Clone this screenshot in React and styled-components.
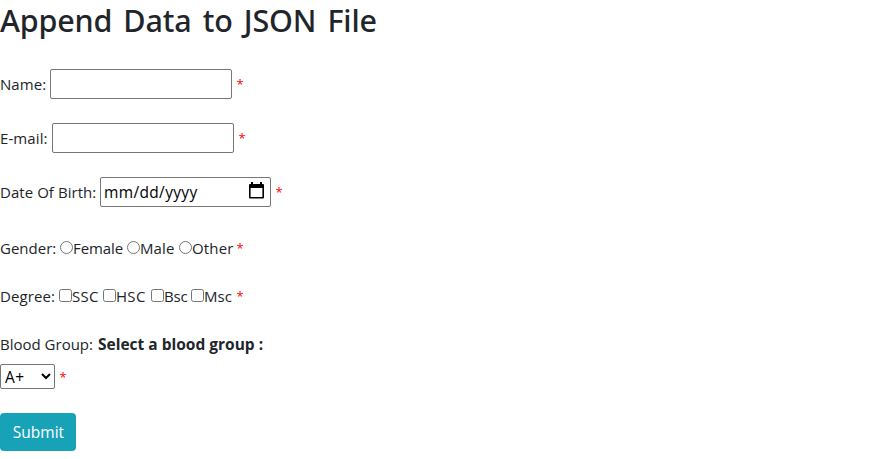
import React from "react";
import styled, { createGlobalStyle } from "styled-components";

const Global = createGlobalStyle`
  *, *::before, *::after { box-sizing: border-box; }
  body {
    margin: 0; background: #fff; color: #212529;
    font: 400 16px/24px "Open Sans", "Noto Sans", sans-serif;
  }
`;
const Form = styled.form`
  display: flex; flex-direction: column; align-items: flex-start;
`;
const Title = styled.h2`
  margin: 0 0 27px; font-family: "Noto Sans", "Open Sans", sans-serif;
  font-size: 30.5px; line-height: 40px; height: 40px;
  font-weight: 500; white-space: nowrap; letter-spacing: -0.2px; word-spacing: 3.5px;
`;
const Row = styled.div`
  display: flex; align-items: center; white-space: nowrap;
  height: ${p => p.$h}px; margin-bottom: ${p => p.$gap}px;
`;
const Label = styled.span`
  width: ${p => p.$w}px; flex: none; font-size: 15px; letter-spacing: ${p => p.$ls ?? 0}px;
`;
const BoldLabel = styled.label`
  font-size: 15.5px; font-weight: 700;
`;
const Field = styled.input`
  width: 182px; height: 30px; margin: 0; padding: 1px 2px;
  border: 1px solid #767676; border-radius: 2px; font: inherit;
`;
const DateField = styled.div`
  width: 171px; height: 30px; padding: 0 6px 0 3px;
  border: 1px solid #767676; border-radius: 2px;
  display: flex; align-items: center; justify-content: space-between;
  font-size: 15.5px; letter-spacing: 0.35px; color: #000;
`;
const CalendarSvg = styled.svg`
  margin-bottom: 3px;
`;
const Check = styled.input`
  width: 13px; height: 13px; margin: 0 0 2px; flex: none;
`;
const Star = styled.span`
  color: #f00; margin-left: ${p => p.$gap ?? 4.5}px; font-size: 13px; line-height: 22px;
`;
const Select = styled.select`
  width: 55px; height: 25px; margin: 0; padding: 0; font: inherit; font-size: 15.5px; letter-spacing: 0.4px;
  color: #000; background: #fff; border: 1px solid #767676; border-radius: 2px;
`;
const Submit = styled.button`
  width: 76px; height: 38px; padding: 0 0 0 1px; border: 0; border-radius: 4px;
  background: #17a2b8; color: #fff; font: inherit; font-size: 15.5px;
`;

const CalendarIcon = () => (
  <CalendarSvg width="15" height="17" viewBox="0 0 15 17" aria-hidden="true">
    <path d="M2 0h2v2h7V0h2v2h1a1 1 0 0 1 1 1v12.5a1 1 0 0 1-1 1H1a1 1 0 0 1-1-1V3a1 1 0 0 1 1-1h1zM1.6 6v9h11.8V6z" fill="#000" fillRule="evenodd" />
  </CalendarSvg>
);

const genders = [["Female", 54, -0.1], ["Male", 39, 0.1], ["Other", 40, 0.15]];
const degrees = [["SSC", 31, 0.3], ["HSC", 35, 0.3], ["Bsc", 27, -0.2], ["Msc", 28, 0.1]];

export default function App() {
  return (
    <Form>
      <Global />
      <Title>Append Data to JSON File</Title>
      <Row $h={34} $gap={20}><Label $w={50} $ls={0.05}>Name:</Label><Field /><Star>*</Star></Row>
      <Row $h={34} $gap={20}><Label $w={52} $ls={0.1}>E-mail:</Label><Field /><Star>*</Star></Row>
      <Row $h={34} $gap={27}>
        <Label $w={100} $ls={0.05}>Date Of Birth:</Label>
        <DateField><span>mm/dd/yyyy</span><CalendarIcon /></DateField><Star>*</Star>
      </Row>
      <Row $h={24} $gap={24}>
        <Label $w={60}>Gender:</Label>
        {genders.map(([name, w, ls]) => (
          <React.Fragment key={name}><Check type="radio" name="gender" /><Label $w={w} $ls={ls}>{name}</Label></React.Fragment>
        ))}
        <Star>*</Star>
      </Row>
      <Row $h={24} $gap={24}>
        <Label $w={59} $ls={0.1}>Degree:</Label>
        {degrees.map(([name, w, ls]) => (
          <React.Fragment key={name}><Check type="checkbox" /><Label $w={w} $ls={ls}>{name}</Label></React.Fragment>
        ))}
        <Star>*</Star>
      </Row>
      <Row $h={24} $gap={8}><Label $w={98}>Blood Group:</Label><BoldLabel>Select a blood group :</BoldLabel></Row>
      <Row $h={25} $gap={24}><Select><option>A+</option></Select><Star>*</Star></Row>
      <Submit type="button">Submit</Submit>
    </Form>
  );
}
